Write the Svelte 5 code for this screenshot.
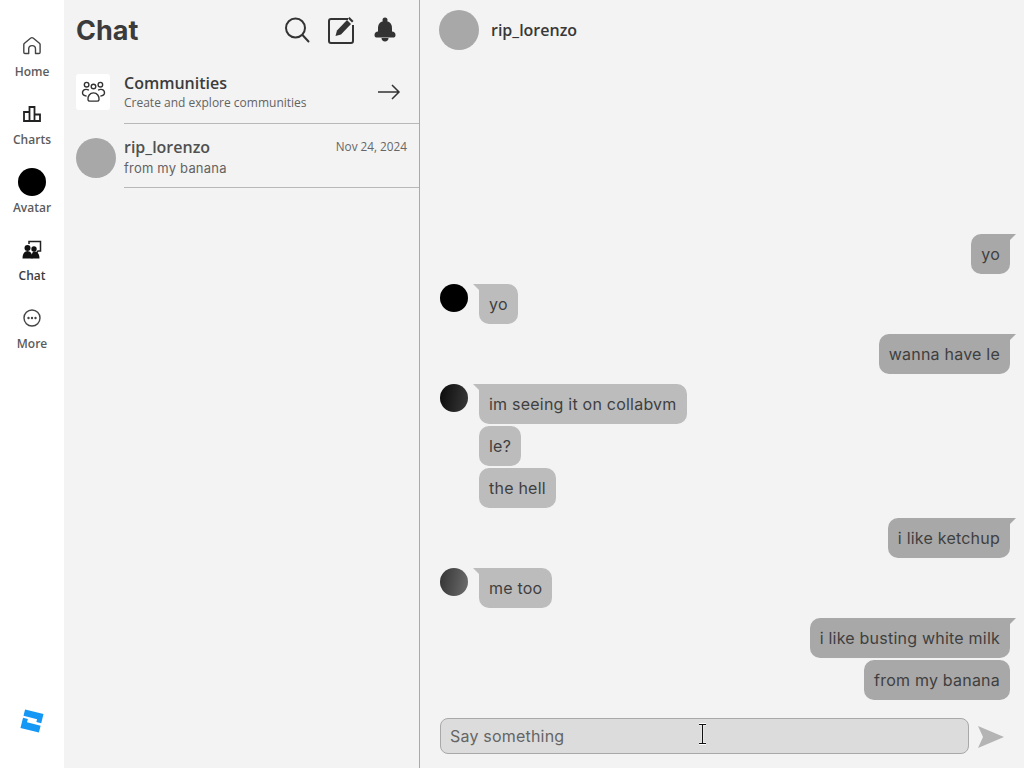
<script>
  const nav = [
    { label: 'Home', icon: 'home' },
    { label: 'Charts', icon: 'charts' },
    { label: 'Avatar', icon: 'avatar' },
    { label: 'Chat', icon: 'chat', active: true },
    { label: 'More', icon: 'more' }
  ];
  const groups = [
    { side: 'me', items: ['yo'] },
    { side: 'them', av: 'a1', items: ['yo'] },
    { side: 'me', items: ['wanna have le'] },
    { side: 'them', av: 'a2', items: ['im seeing it on collabvm', 'le?', 'the hell'] },
    { side: 'me', items: ['i like ketchup'] },
    { side: 'them', av: 'a3', items: ['me too'] },
    { side: 'me', items: ['i like busting white milk', 'from my banana'] }
  ];
</script>

<div class="app">
  <nav class="rail">
    <div class="navs">
      {#each nav as n}
        <div class="nav" class:active={n.active}>
          <div class="ico">
            {#if n.icon === 'home'}
              <svg width="20" height="20" viewBox="0 0 20 20" fill="none" stroke="#444" stroke-width="1.4" stroke-linejoin="round"><path d="M3 17.5c-.8 0-1.2-.5-1.2-1.2V8.6c0-.6.2-1 .7-1.4l6-5c.9-.7 2-.7 2.900 0l6 5c.5.4.7.8.7 1.400v7.700c0 .7-.4 1.200-1.200 1.200h-3.400v-4.500a3.400 3.400 0 0 0-6.800 0v4.500z"/></svg>
            {:else if n.icon === 'charts'}
              <svg width="20" height="20" viewBox="0 0 20 20" fill="none" stroke="#222" stroke-width="1.800"><path d="M2 17V8h5.500V17zM7.500 17V3h5V17zM12.500 17v-6.500h5.500V17z"/></svg>
            {:else if n.icon === 'avatar'}
              <span class="dot"></span>
            {:else if n.icon === 'chat'}
              <svg width="20" height="20" viewBox="0 0 20 20"><path d="M7 4V1.500h11.500V11H16l-1.500 2" fill="none" stroke="#222" stroke-width="1.500"/><circle cx="5.500" cy="8" r="3" fill="#111"/><circle cx="12" cy="9" r="2.700" fill="#111"/><path d="M0.500 18.500c0-4 1.500-7.500 5-7.500s5 3.500 5 7.500z" fill="#111"/><path d="M9.500 18.500c0-4 .5-7 3-7 3.500 0 5 3 5 7z" fill="#111"/></svg>
            {:else}
              <svg width="20" height="20" viewBox="0 0 20 20"><circle cx="10" cy="10" r="8" fill="none" stroke="#444" stroke-width="1.400"/><circle cx="6.500" cy="10" r="1.200" fill="#444"/><circle cx="10" cy="10" r="1.200" fill="#444"/><circle cx="13.500" cy="10" r="1.200" fill="#444"/></svg>
            {/if}
          </div>
          <span class="nl">{n.label}</span>
        </div>
      {/each}
    </div>
    <svg class="logo" width="26" height="26" viewBox="0 0 26 26"><g transform="rotate(14 13 13)" fill="#1497f5"><path d="M3.500 3.500h19V13h-5V10h-14z" /><path d="M3.500 12h5v3.500h14v7h-19z"/></g></svg>
  </nav>

  <section class="list">
    <header class="lhead">
      <h1>Chat</h1>
      <div class="tools">
        <svg width="28" height="28" viewBox="0 0 28 28" fill="none" stroke="#333" stroke-width="2" stroke-linecap="round"><circle cx="12.500" cy="12" r="9.500"/><path d="M19.500 19l6 6.500"/></svg>
        <svg width="28" height="28" viewBox="0 0 28 28"><path d="M21 3H4a2 2 0 0 0-2 2v20a2 2 0 0 0 2 2h20a2 2 0 0 0 2-2V9" fill="none" stroke="#333" stroke-width="2"/><path d="M8.500 20l1.500-5.500L20 4l4 4-10 10.500z" fill="#333"/><path d="M21 2.500l1.500-1.500 4 4-1.500 1.500z" fill="#333"/></svg>
        <svg width="28" height="28" viewBox="0 0 28 28" fill="#333"><circle cx="14" cy="4" r="2.500"/><path d="M7 12c0-4.500 3-7 7-7s7 2.500 7 7v4H7z"/><path d="M3.500 19c0-2 1.500-3.500 3.500-3.500h14c2 0 3.500 1.500 3.500 3.500s-1 2.500-2.500 2.500H6c-1.500 0-2.500-.5-2.500-2.500z"/><path d="M10.500 22h7c0 2-1.500 3.500-3.500 3.500s-3.500-1.500-3.500-3.500z"/></svg>
      </div>
    </header>

    <div class="row comm">
      <div class="cbox">
        <svg width="25" height="22" viewBox="0 0 26 24" fill="none" stroke="#333" stroke-width="1.500"><circle cx="5.500" cy="4" r="2.500"/><circle cx="13" cy="6" r="2.500"/><circle cx="20.500" cy="4" r="2.500"/><path d="M7 20.500c-.5-4 2-7.500 6-7.500s6.500 3.500 6 7.500c-.2 1-1 1.500-2 1.500H9c-1 0-1.800-.5-2-1.500z"/><path d="M8 10c-3-1.500-7-1-7 3 0 2.500 2 3 4.500 3.500M18 10c3-1.500 7-1 7 3 0 2.500-2 3-4.500 3.500"/></svg>
      </div>
      <div class="rbody">
        <div class="rtitle">Communities</div>
        <div class="rsub small">Create and explore communities</div>
        <svg class="arrow" width="24" height="16" viewBox="0 0 24 16" fill="none" stroke="#333" stroke-width="1.500"><path d="M1 8h21M15 1l7 7-7 7"/></svg>
      </div>
    </div>

    <div class="row conv">
      <span class="avatar"></span>
      <div class="rbody">
        <div class="rtop"><span class="rtitle name">rip_lorenzo</span><span class="date">Nov 24, 2024</span></div>
        <div class="rsub">from my banana</div>
      </div>
    </div>
  </section>

  <main class="chat">
    <header class="chead">
      <span class="avatar"></span>
      <span class="cname">rip_lorenzo</span>
    </header>
    <div class="msgs">
      {#each groups as g}
        <div class="group {g.side}">
          {#if g.side === 'them'}<span class="mini {g.av}"></span>{/if}
          <div class="stack">
            {#each g.items as t, i}
              <div class="bub" class:first={i === 0}>{t}</div>
            {/each}
          </div>
        </div>
      {/each}
    </div>
    <div class="composer">
      <div class="input">Say something</div>
      <svg class="send" width="26" height="22" viewBox="0 0 26 22"><path d="M0 0l26 11L0 22l5-11z" fill="#b4b4b4"/></svg>
      <svg class="cursor" width="9" height="22" viewBox="0 0 9 22" fill="none"><path d="M1 1h7M1 21h7M4.500 1v20" stroke="#fff" stroke-width="3"/><path d="M1 1.500h7M1 20.500h7M4.500 1.500v19" stroke="#111" stroke-width="1.200"/></svg>
    </div>
  </main>
</div>

<style>
  :global(body) { margin: 0; }
  .app {
    display: flex;
    width: 1024px;
    height: 768px;
    overflow: hidden;
    background: #f3f3f3;
    color: #3a3a3a;
    font-family: "Inter", sans-serif;
  }
  .rail {
    width: 64px;
    flex: none;
    background: #fff;
    display: flex;
    flex-direction: column;
    align-items: center;
    justify-content: space-between;
    padding: 28px 0 34px;
    box-sizing: border-box;
  }
  .navs { display: flex; flex-direction: column; gap: 12px; }
  .nav {
    width: 64px;
    height: 56px;
    display: flex;
    flex-direction: column;
    align-items: center;
  }
  .ico { height: 36px; display: flex; align-items: center; justify-content: center; }
  .dot { width: 28px; height: 28px; border-radius: 50%; background: #000; }
  .nl {
    font: 600 12px/16px "Open Sans", sans-serif;
    color: #5c5c5c;
  }
  .active .nl { color: #3c3c3c; }
  .logo { display: block; }

  .list {
    width: 356px;
    flex: none;
    box-sizing: border-box;
    border-right: 1px solid #a9a9a9;
  }
  .lhead {
    height: 60px;
    display: flex;
    align-items: center;
    justify-content: space-between;
    padding: 0 20px 0 12px;
  }
  h1 { margin: 0; font: 700 27px/1 "Inter", sans-serif; color: #3b3b3b; }
  .tools { display: flex; gap: 16px; align-items: center; }

  .row { display: flex; gap: 8px; padding-left: 12px; height: 64px; box-sizing: border-box; }
  .cbox {
    width: 34px; height: 36px; margin: 14px 6px 0 0; background: #fff;
    display: flex; align-items: center; justify-content: center; border-radius: 3px; flex: none;
  }
  .rbody {
    flex: 1;
    position: relative;
    border-bottom: 1px solid #b8b8b8;
    padding: 13px 12px 0 0;
  }
  .rtitle { font: 600 16px/20px "Open Sans", sans-serif; color: #3c3c3c; }
  .name { color: #505050; }
  .rsub { font: 400 13px/22px "Inter", sans-serif; letter-spacing: .2px; color: #636363; }
  .rsub.small { font: 400 12px/20px "Open Sans", sans-serif; letter-spacing: 0; }
  .arrow { position: absolute; right: 18px; top: 24px; }
  .rtop { display: flex; justify-content: space-between; align-items: flex-start; }
  .date { font: 400 11.750px/18px "Open Sans", sans-serif; color: #666; }
  .avatar { width: 40px; height: 40px; border-radius: 50%; background: #a8a8a8; flex: none; }
  .conv .avatar { margin-top: 14px; }

  .chat { flex: 1; min-width: 0; display: flex; flex-direction: column; position: relative; }
  .chead { height: 60px; display: flex; align-items: center; gap: 12px; padding-left: 19px; flex: none; }
  .cname { font: 600 16px/20px "Open Sans", sans-serif; color: #383838; }
  .msgs {
    flex: 1;
    display: flex;
    flex-direction: column;
    justify-content: flex-end;
    gap: 10px;
    padding: 0 14px 0 20px;
  }
  .group { display: flex; }
  .group.me { justify-content: flex-end; }
  .group.them { gap: 11px; }
  .stack { display: flex; flex-direction: column; gap: 2px; }
  .me .stack { align-items: flex-end; }
  .them .stack { align-items: flex-start; }
  .bub {
    position: relative;
    height: 40px;
    box-sizing: border-box;
    padding: 0 10px;
    border-radius: 10px;
    font-size: 16px;
    letter-spacing: .22px;
    line-height: 41px;
    white-space: nowrap;
    color: #3f3f3f;
  }
  .me .bub { background: #a8a8a8; }
  .them .bub { background: #bcbcbc; }
  .first::before {
    content: "";
    position: absolute;
    top: 0;
    width: 0;
    height: 0;
    border-top: 6px solid;
  }
  .me .first { border-top-right-radius: 0; }
  .them .first { border-top-left-radius: 0; }
  .me .first::before { right: -6px; border-right: 6px solid transparent; border-top-color: #a8a8a8; }
  .them .first::before { left: -6px; border-left: 6px solid transparent; border-top-color: #bcbcbc; }
  .mini { width: 28px; height: 28px; border-radius: 50%; flex: none; }
  .a1 { background: #000; }
  .a2 { background: linear-gradient(100deg, #0a0a0a, #3a3a3a); }
  .a3 { background: linear-gradient(100deg, #333, #6e6e6e); }

  .composer {
    height: 68px;
    flex: none;
    display: flex;
    align-items: flex-start;
    gap: 9px;
    padding: 18px 20px 0 20px;
    box-sizing: border-box;
    position: relative;
  }
  .input {
    width: 529px;
    height: 36px;
    flex: none;
    box-sizing: border-box;
    border: 1px solid #a8a8a8;
    border-radius: 8px;
    background: #dcdcdc;
    padding-left: 9px;
    font-size: 16px;
    letter-spacing: .2px;
    line-height: 35px;
    color: #656565;
  }
  .send { margin-top: 8px; flex: none; }
  .cursor { position: absolute; left: 278px; top: 23px; }
</style>
